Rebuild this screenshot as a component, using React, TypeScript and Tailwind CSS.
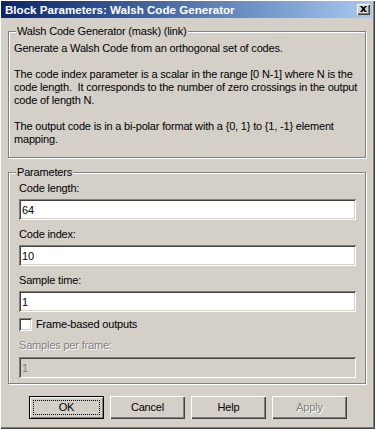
import React from "react";

const sunken =
  "shadow-[inset_1px_1px_0_#808080,inset_-1px_-1px_0_#ffffff,inset_2px_2px_0_#404040,inset_-2px_-2px_0_#d4d0c8]";

function Group({
  label,
  className,
  children,
}: {
  label: string;
  className: string;
  children: React.ReactNode;
}) {
  return (
    <div
      className={`relative border border-[#808080] shadow-[1px_1px_0_#ffffff,inset_1px_1px_0_#ffffff] ${className}`}
    >
      <span className="absolute left-[7px] top-[-7px] bg-[#d4d0c8] px-[1px] leading-[13px] whitespace-nowrap">
        {label}
      </span>
      {children}
    </div>
  );
}

function Field({ value, disabled }: { value: string; disabled?: boolean }) {
  return (
    <input
      readOnly
      value={value}
      className={`block h-[21px] w-full border-0 outline-none pl-[3px] text-[11px] tracking-[-0.18px] font-['Liberation_Sans',Arial,sans-serif] ${sunken} ${
        disabled ? "bg-[#d4d0c8] text-[#808080]" : "bg-white text-black"
      }`}
    />
  );
}

function Btn({
  label,
  isDefault,
  disabled,
}: {
  label: string;
  isDefault?: boolean;
  disabled?: boolean;
}) {
  if (isDefault) {
    return (
      <div className="w-[75px] h-[23px] border border-black bg-[#d4d0c8] shadow-[inset_1px_1px_0_#ffffff,inset_-1px_-1px_0_#808080] p-[3px]">
        <div className="h-full w-full border border-dotted border-black flex items-center justify-center">
          {label}
        </div>
      </div>
    );
  }
  return (
    <div
      className={`w-[75px] h-[23px] bg-[#d4d0c8] flex items-center justify-center shadow-[inset_1px_1px_0_#ffffff,inset_-1px_-1px_0_#404040,inset_-2px_-2px_0_#808080] ${
        disabled ? "text-[#808080] [text-shadow:1px_1px_0_#ffffff]" : "text-black"
      }`}
    >
      {label}
    </div>
  );
}

export default function App() {
  return (
    <div className="w-[375px] h-[429px] bg-[#d4d0c8] flex flex-col pt-[1px] pl-[1px] pr-[3px] shadow-[inset_1px_1px_0_#ffffff,inset_-1px_-1px_0_#404040,inset_-2px_-2px_0_#808080] font-['Liberation_Sans',Arial,sans-serif] text-[11px] leading-[13px] tracking-[-0.18px] text-black select-none overflow-hidden">
      {/* title bar */}
      <div className="h-[17px] flex items-center justify-between bg-linear-to-r from-[#0a246a] to-[#a6caf0] pl-[4px] pr-[2px]">
        <span className="text-white font-bold text-[11.6px] leading-[14px] tracking-normal whitespace-nowrap">
          Block Parameters: Walsh Code Generator
        </span>
        <div className="w-[13px] h-[11px] bg-[#d4d0c8] flex items-center justify-center shadow-[inset_1px_1px_0_#ffffff,inset_-1px_-1px_0_#404040,inset_-2px_-2px_0_#808080]">
          <svg width="7" height="6" viewBox="0 0 7 6" className="mb-[1px]">
            <path d="M0 0h2l1.5 1.5L5 0h2L4.5 3 7 6H5L3.5 4.5 2 6H0l2.5-3z" fill="#000" />
          </svg>
        </div>
      </div>

      {/* description group */}
      <Group
        label="Walsh Code Generator (mask) (link)"
        className="ml-[7px] mt-[13px] w-[358px] h-[127px] pt-[10px] pl-[5px]"
      >
        <div className="whitespace-nowrap">
          <p>Generate a Walsh Code from an orthogonal set of codes.</p>
          <p className="mt-[13px]">
            The code index parameter is a scalar in the range [0 N-1] where N is the
            <br />
            code length.&nbsp; It corresponds to the number of zero crossings in the output
            <br />
            code of length N.
          </p>
          <p className="mt-[13px]">
            The output code is in a bi-polar format with a {"{0, 1}"} to {"{1, -1}"} element
            <br />
            mapping.
          </p>
        </div>
      </Group>

      {/* parameters group */}
      <Group
        label="Parameters"
        className="ml-[7px] mt-[14px] w-[358px] pt-[9px] pl-[10px] pr-[9px] pb-[5px]"
      >
        <div className="flex flex-col">
          <div className="h-[13px] mb-[4px]">Code length:</div>
          <Field value="64" />
          <div className="h-[13px] mt-[8px] mb-[4px]">Code index:</div>
          <Field value="10" />
          <div className="h-[13px] mt-[8px] mb-[4px]">Sample time:</div>
          <Field value="1" />
          <div className="mt-[5px] h-[15px] flex items-center gap-[4px]">
            <div className={`w-[13px] h-[13px] bg-white ${sunken}`} />
            <span>Frame-based outputs</span>
          </div>
          <div className="h-[13px] mt-[7px] mb-[5px] text-[#808080] [text-shadow:1px_1px_0_#ffffff]">
            Samples per frame:
          </div>
          <Field value="1" disabled />
        </div>
      </Group>

      {/* buttons */}
      <div className="ml-[7px] mt-[12px] w-[358px] pl-[2px] flex justify-center gap-[6px]">
        <Btn label="OK" isDefault />
        <Btn label="Cancel" />
        <Btn label="Help" />
        <Btn label="Apply" disabled />
      </div>
    </div>
  );
}
